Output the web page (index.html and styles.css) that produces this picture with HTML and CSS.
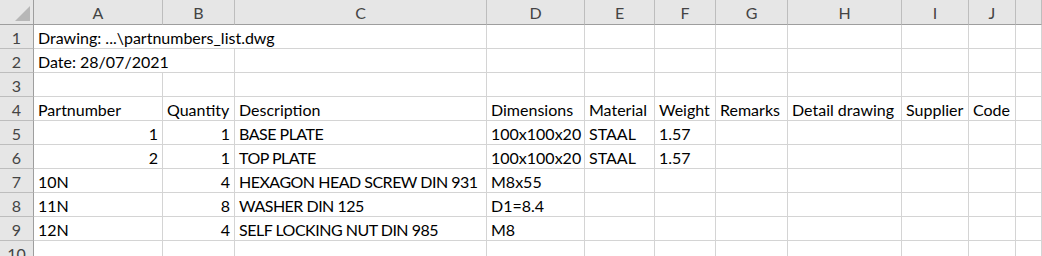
FILE: index.html
```html
<!DOCTYPE html>
<html lang="en">
<head>
	<meta charset="UTF-8">
	<title>partnumbers_list</title>
	<link rel="stylesheet" href="styles.css">
</head>
<body>
	<div class="sheet">
		<!-- column headers -->
		<div class="corner"><span class="tri"></span></div>
		<div class="colhead">A</div>
		<div class="colhead">B</div>
		<div class="colhead">C</div>
		<div class="colhead">D</div>
		<div class="colhead">E</div>
		<div class="colhead">F</div>
		<div class="colhead">G</div>
		<div class="colhead">H</div>
		<div class="colhead">I</div>
		<div class="colhead">J</div>
		<div class="colhead"></div>

		<!-- 1 -->
		<div class="rowhead">1</div>
		<div class="cell span3">Drawing: ...\partnumbers_list.dwg</div>
		<div class="cell"></div><div class="cell"></div><div class="cell"></div><div class="cell"></div>
		<div class="cell"></div><div class="cell"></div><div class="cell"></div><div class="cell"></div>

		<!-- 2 -->
		<div class="rowhead">2</div>
		<div class="cell span2">Date: 28/07/2021</div>
		<div class="cell"></div><div class="cell"></div><div class="cell"></div><div class="cell"></div>
		<div class="cell"></div><div class="cell"></div><div class="cell"></div><div class="cell"></div>
		<div class="cell"></div>

		<!-- 3 -->
		<div class="rowhead">3</div>
		<div class="cell"></div><div class="cell"></div><div class="cell"></div><div class="cell"></div>
		<div class="cell"></div><div class="cell"></div><div class="cell"></div><div class="cell"></div>
		<div class="cell"></div><div class="cell"></div><div class="cell"></div>

		<!-- 4 -->
		<div class="rowhead">4</div>
		<div class="cell">Partnumber</div>
		<div class="cell">Quantity</div>
		<div class="cell">Description</div>
		<div class="cell">Dimensions</div>
		<div class="cell">Material</div>
		<div class="cell">Weight</div>
		<div class="cell">Remarks</div>
		<div class="cell">Detail drawing</div>
		<div class="cell">Supplier</div>
		<div class="cell">Code</div>
		<div class="cell"></div>

		<!-- 5 -->
		<div class="rowhead">5</div>
		<div class="cell num">1</div>
		<div class="cell num">1</div>
		<div class="cell upper">BASE PLATE</div>
		<div class="cell">100x100x20</div>
		<div class="cell">STAAL</div>
		<div class="cell">1.57</div>
		<div class="cell"></div><div class="cell"></div><div class="cell"></div><div class="cell"></div>
		<div class="cell"></div>

		<!-- 6 -->
		<div class="rowhead">6</div>
		<div class="cell num">2</div>
		<div class="cell num">1</div>
		<div class="cell upper">TOP PLATE</div>
		<div class="cell">100x100x20</div>
		<div class="cell">STAAL</div>
		<div class="cell">1.57</div>
		<div class="cell"></div><div class="cell"></div><div class="cell"></div><div class="cell"></div>
		<div class="cell"></div>

		<!-- 7 -->
		<div class="rowhead">7</div>
		<div class="cell">10N</div>
		<div class="cell num">4</div>
		<div class="cell upper">HEXAGON HEAD SCREW DIN 931</div>
		<div class="cell">M8x55</div>
		<div class="cell"></div><div class="cell"></div><div class="cell"></div><div class="cell"></div>
		<div class="cell"></div><div class="cell"></div><div class="cell"></div>

		<!-- 8 -->
		<div class="rowhead">8</div>
		<div class="cell">11N</div>
		<div class="cell num">8</div>
		<div class="cell upper">WASHER DIN 125</div>
		<div class="cell">D1=8.4</div>
		<div class="cell"></div><div class="cell"></div><div class="cell"></div><div class="cell"></div>
		<div class="cell"></div><div class="cell"></div><div class="cell"></div>

		<!-- 9 -->
		<div class="rowhead">9</div>
		<div class="cell">12N</div>
		<div class="cell num">4</div>
		<div class="cell upper">SELF LOCKING NUT DIN 985</div>
		<div class="cell">M8</div>
		<div class="cell"></div><div class="cell"></div><div class="cell"></div><div class="cell"></div>
		<div class="cell"></div><div class="cell"></div><div class="cell"></div>

		<!-- 10 -->
		<div class="rowhead">10</div>
		<div class="cell"></div><div class="cell"></div><div class="cell"></div><div class="cell"></div>
		<div class="cell"></div><div class="cell"></div><div class="cell"></div><div class="cell"></div>
		<div class="cell"></div><div class="cell"></div><div class="cell"></div>
	</div>
</body>
</html>
```

FILE: styles.css
```css
html, body {
	margin: 0;
	height: 100%;
	overflow: hidden;
	background: #fff;
}

.sheet {
	display: grid;
	grid-template-columns: 34px 129px 72px 252px 98px 70px 61px 72px 114px 67px 47px 1fr;
	grid-template-rows: 25px;
	grid-auto-rows: 24px;
	font-family: Lato, "Open Sans", sans-serif;
	font-size: 16px;
	line-height: 19px;
	color: #000;
}

.sheet > div {
	box-sizing: border-box;
	border-right: 1px solid #d4d4d4;
	border-bottom: 1px solid #d4d4d4;
	white-space: nowrap;
	display: flex;
	align-items: flex-end;
}

.corner,
.colhead,
.rowhead {
	background: #e6e6e6;
	color: #444;
}

.colhead {
	justify-content: center;
	padding-bottom: 2px;
	border-right-color: #bdbdbd !important;
	border-bottom-color: #9e9e9e !important;
}

.corner {
	position: relative;
	border-bottom-color: #9e9e9e !important;
	border-right-color: #9e9e9e !important;
}

/* select-all triangle */
.tri {
	position: absolute;
	right: 3px;
	bottom: 3px;
	width: 0;
	height: 0;
	border-left: 15px solid transparent;
	border-bottom: 15px solid #b7b7b7;
}

.rowhead {
	justify-content: center;
	padding-bottom: 1px;
	border-right-color: #9e9e9e !important;
	border-bottom-color: #bdbdbd !important;
}

.cell {
	padding: 0 4px 1px;
}

.upper {
	letter-spacing: -0.5px;
}

.num {
	justify-content: flex-end;
}

.span2 { grid-column: span 2; }
.span3 { grid-column: span 3; }
```
